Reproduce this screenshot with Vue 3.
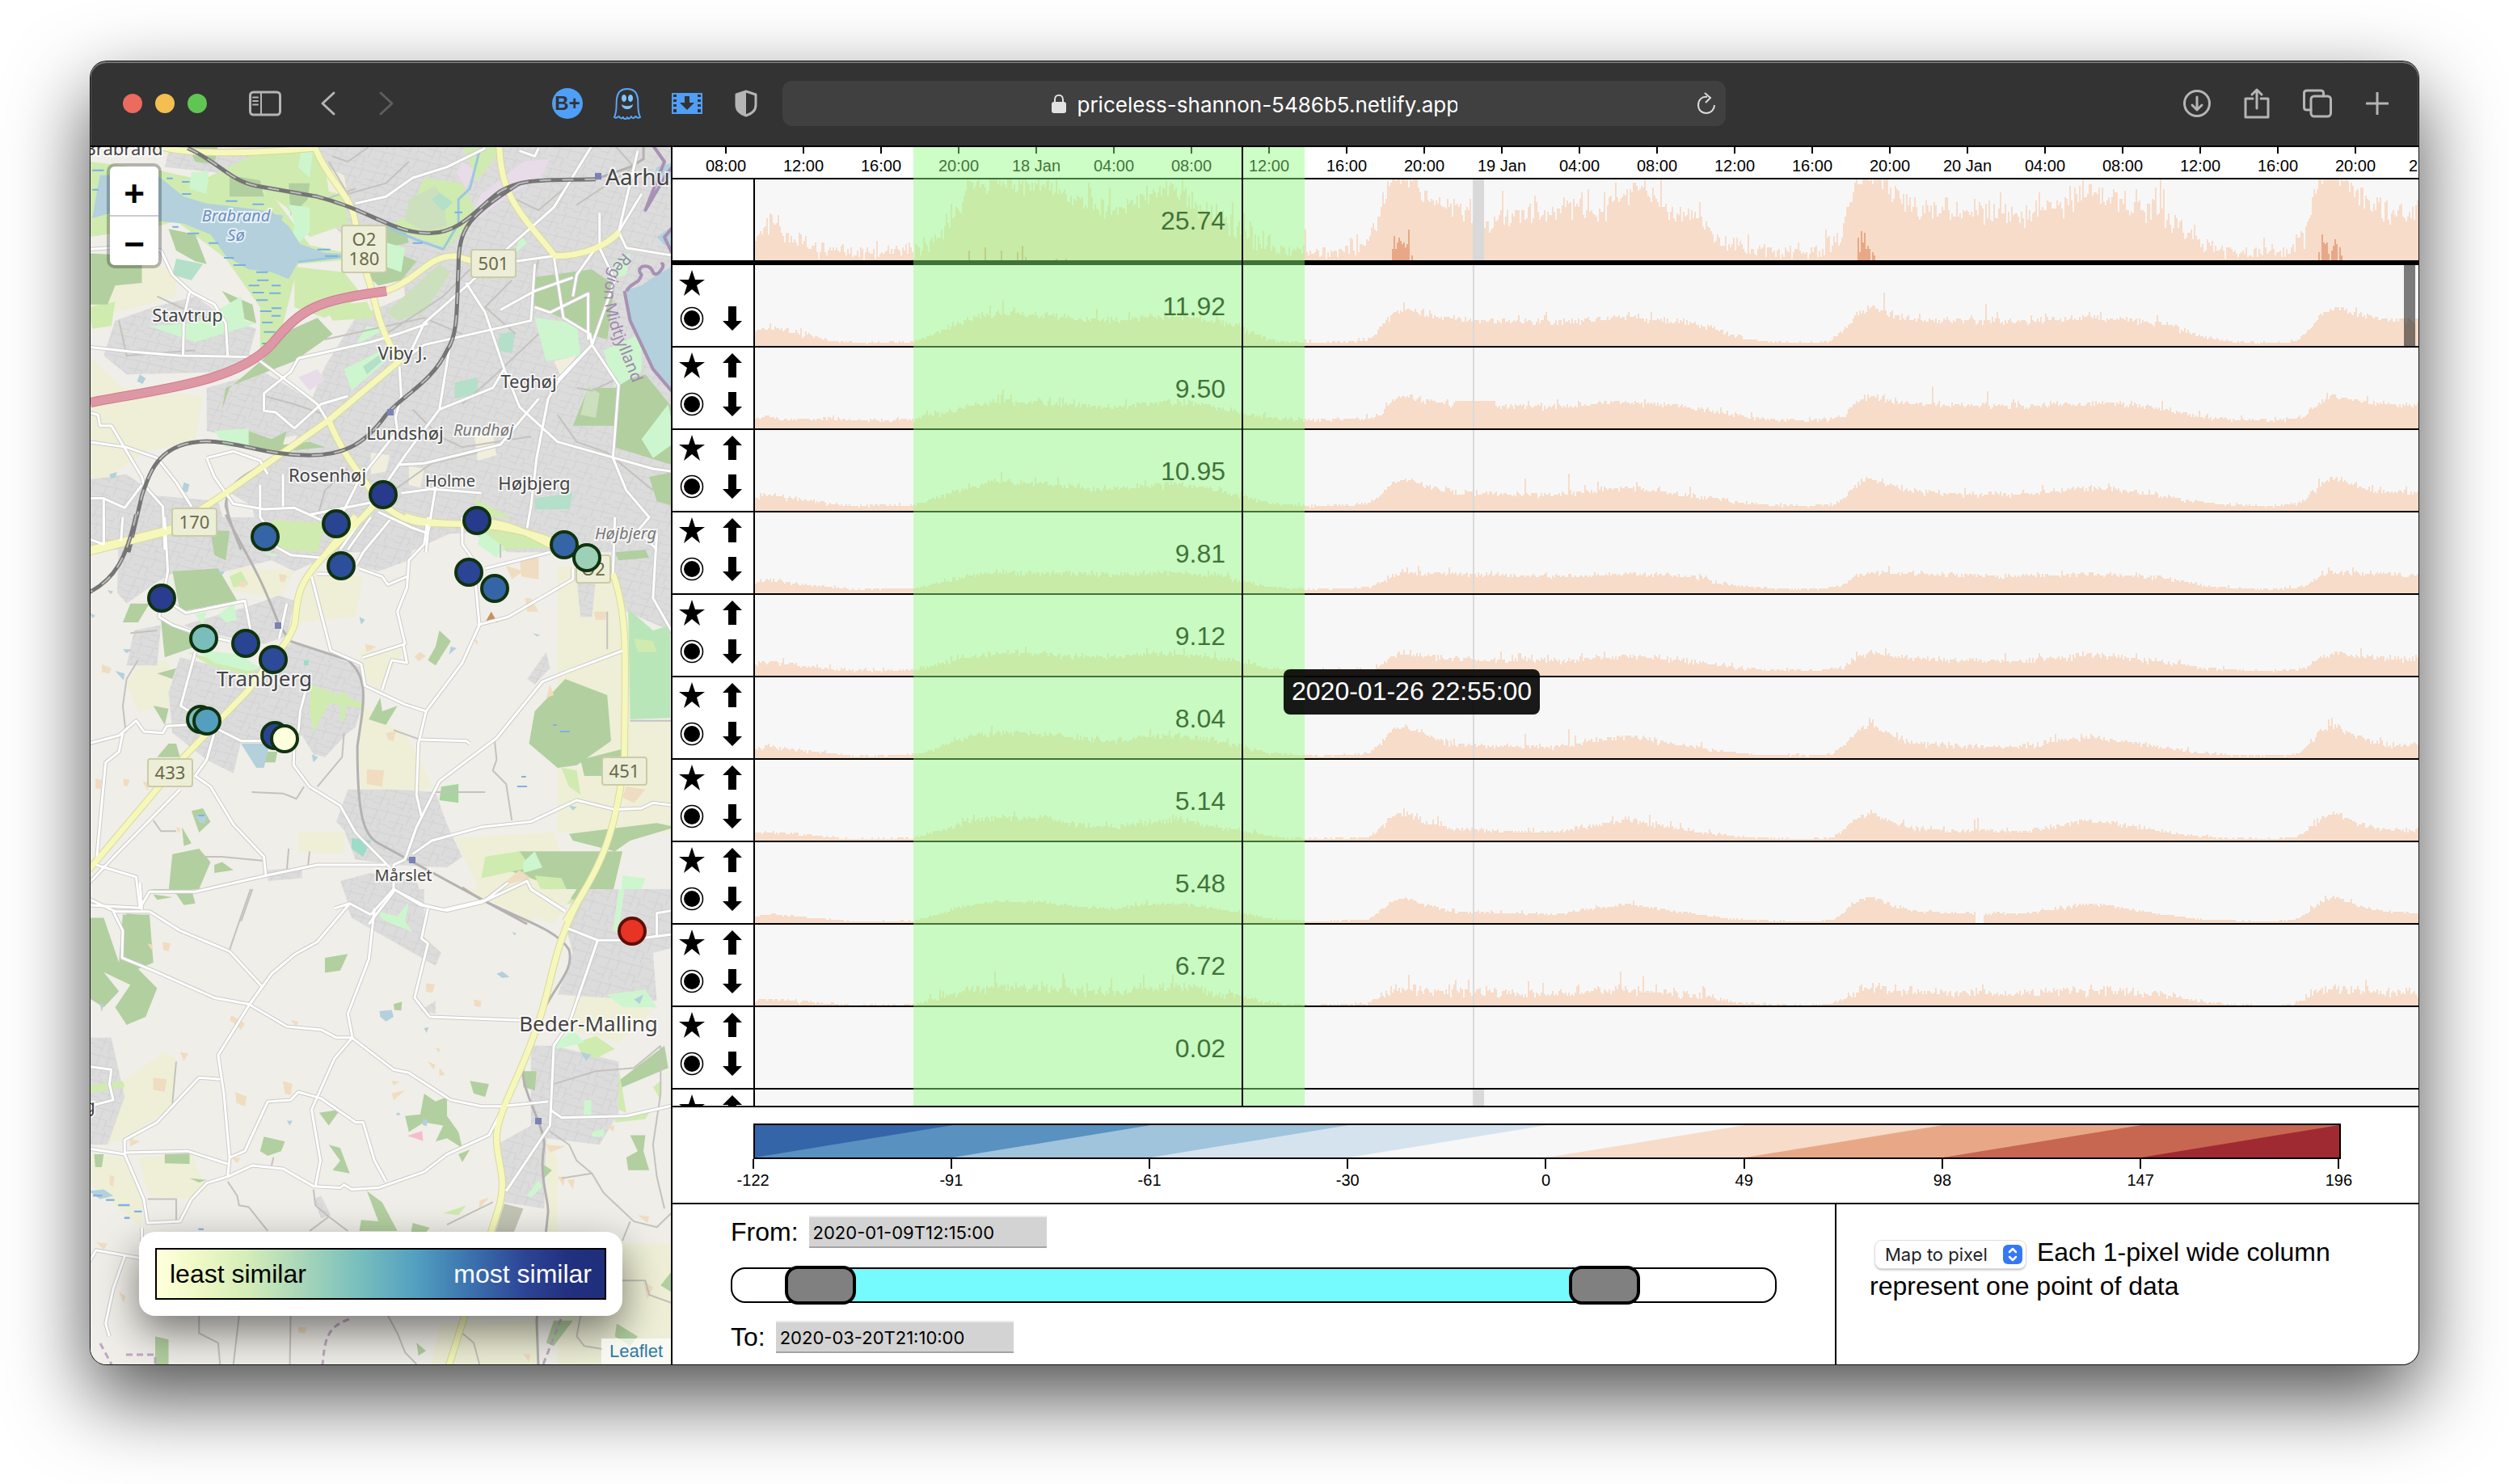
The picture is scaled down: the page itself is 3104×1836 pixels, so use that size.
<script setup>
const ticks = [
  '08:00', '12:00', '16:00', '20:00', '18 Jan', '04:00', '08:00', '12:00', '16:00', '20:00',
  '19 Jan', '04:00', '08:00', '12:00', '16:00', '20:00', '20 Jan', '04:00', '08:00', '12:00',
  '16:00', '20:00', '21 Jan',
]

const CHART_W = 2058

function random(seed) {
  let s = seed
  return () => {
    s = (s * 1664525 + 1013904223) % 4294967296
    return s / 4294967296
  }
}

function levelAt(points, x) {
  for (let i = 1; i < points.length; i++) {
    if (x <= points[i][0]) {
      const [x0, y0] = points[i - 1]
      const [x1, y1] = points[i]
      return y0 + ((y1 - y0) * (x - x0)) / (x1 - x0)
    }
  }
  return points[points.length - 1][1]
}

// One column for every two pixels, as a stepped area.
function area(points, seed, noise, spikes = {}, gap = null) {
  const rnd = random(seed)
  let d = 'M0 100'
  for (let x = 0; x < CHART_W; x += 2) {
    const base = levelAt(points, x)
    const r = rnd() + rnd() - 1
    const burst = rnd() > 0.92 ? rnd() * noise * 1.8 : 0
    let h = base + (r * noise + burst) * Math.min(1, base / 22 + 0.12)
    if (spikes[x]) h = spikes[x]
    if (gap && x >= gap[0] && x < gap[1]) h = 0
    h = Math.max(0, Math.min(100, Math.round(h / 2) * 2))
    d += `V${100 - h}H${x + 2}`
  }
  return d + 'V100Z'
}

// Typical traffic curve: start, floor, first day (a, b, c), then peak, plateau, hump.
function curve(s, f, a, b, c, p, m, h) {
  const day = (x) => [
    [x - 46, f + 2], [x - 34, p * 0.35], [x - 14, p * 0.85], [x + 2, p], [x + 26, (p + m) / 2 + 1],
    [x + 60, m + 3], [x + 120, m + 1], [x + 190, m], [x + 230, (m + h) / 2], [x + 276, h],
    [x + 330, m + (h - m) * 0.35], [x + 372, m * 0.85], [x + 410, f + (m - f) * 0.3], [x + 452, f + 1], [x + 500, f],
  ]
  return [
    [0, s * 0.9], [16, s * 1.1], [50, s * 0.8], [90, f + 3], [120, f], [196, f + 1], [230, f + (a - f) * 0.4],
    [266, a * 0.85], [300, a], [356, a * 0.95], [400, b + 2], [446, b], [490, (b + c) / 2 + 2], [526, c],
    [566, b], [600, b * 0.72], [636, f + 3], [690, f],
    ...day(802), ...day(1378), ...day(1952),
  ]
}

const mainCurve = [
  [0, 32], [14, 42], [28, 44], [42, 30], [58, 20], [80, 14], [110, 10], [160, 8], [196, 12], [216, 22],
  [236, 42], [256, 70], [268, 98], [346, 92], [366, 88], [400, 72], [426, 64], [450, 58], [466, 72],
  [506, 90], [526, 88], [546, 62], [570, 58], [596, 40], [616, 24], [646, 14], [686, 10], [726, 12],
  [756, 20], [766, 38], [776, 70], [788, 102], [812, 106], [826, 80], [844, 70], [870, 62], [888, 50],
  [904, 46], [926, 54], [986, 56], [1016, 66], [1051, 58], [1068, 82], [1106, 86], [1126, 62], [1166, 54],
  [1186, 26], [1216, 16], [1236, 10], [1316, 10], [1336, 20], [1348, 50], [1358, 82], [1366, 106],
  [1390, 106], [1402, 84], [1426, 66], [1466, 62], [1506, 60], [1566, 55], [1616, 66], [1646, 84],
  [1666, 80], [1706, 66], [1746, 56], [1766, 36], [1796, 18], [1826, 10], [1896, 10], [1916, 26],
  [1926, 70], [1936, 102], [1968, 106], [1982, 82], [2016, 62], [2042, 55], [2058, 70],
]

const peaks = [
  [264, 12], [284, 16], [304, 12], [324, 10], [330, 18], [334, 4], [372, 2], [384, 2],
  [788, 14], [790, 30], [792, 14], [794, 22], [796, 28], [798, 24], [800, 20], [802, 22], [804, 16], [806, 20], [808, 38], [812, 6],
  [1364, 28], [1366, 10], [1368, 36], [1370, 22], [1372, 34], [1374, 14], [1376, 18], [1378, 14], [1382, 10], [1384, 6],
  [1934, 10], [1938, 32], [1940, 22], [1942, 20], [1944, 22], [1946, 8], [1950, 12], [1952, 18], [1954, 26], [1956, 20], [1960, 16], [1962, 6],
]
const mainArea = area(mainCurve, 11, 18)
const mainPeaks = peaks.map(([x, h]) => `M${x} 100v${-h}h2v${h}z`).join('')

const flat = {}
for (let x = 866; x < 916; x += 2) flat[x] = 34

const rows = [
  { value: '11.92', d: area(curve(21, 4, 40, 32, 37, 47, 30, 35), 3, 5.5, { 306: 56, 1396: 66, 1522: 52 }) },
  { value: '9.50', d: area(curve(13, 10, 33, 27, 32, 40, 27, 32), 5, 5, { 306: 48, 1456: 52, 1524: 46, ...flat }) },
  { value: '10.95', d: area(curve(18, 6, 36, 27, 32, 40, 20, 29), 7, 5, { 952: 40, 1006: 46, 1042: 36 }) },
  { value: '9.81', d: area(curve(15, 5, 26, 22, 25, 26, 21, 24), 9, 4) },
  { value: '9.12', d: area(curve(16, 6, 28, 22, 27, 29, 18, 25), 13, 5) },
  { value: '8.04', d: area(curve(13, 3, 32, 22, 28, 40, 14, 27), 15, 5, { 952: 30, 1006: 36 }) },
  { value: '5.14', d: area(curve(10, 2, 29, 17, 26, 34, 11, 26), 17, 5, { 1508: 26, 1512: 28 }) },
  { value: '5.48', d: area(curve(10, 2, 27, 18, 24, 32, 11, 24), 19, 3, {}, [1510, 1520]) },
  { value: '6.72', d: area(curve(7, 0, 24, 16, 24, 22, 14, 20), 21, 9) },
  { value: '0.02', d: '' },
  { value: '', d: '', last: true },
]

const scaleColors = ['#3465a8', '#5991c1', '#9fc4dc', '#d5e3ef', '#f7f7f7', '#f7dcc9', '#e8a888', '#c76751', '#a02a32']
const scaleLabels = ['-122', '-91', '-61', '-30', '0', '49', '98', '147', '196']

const G = '#b2cf9f'
const L = '#cfebb0'
const F = '#eeefd6'
const W = '#b3d0dc'
const R = 'url(#streets)'
const O = '#f0dcc0'
const M = '#cdf6cf'
const P = '#b4dfc8'

// Three sheets of the map, north to south, each in its own grid.
const sheets = [
  {
    t: 'translate(-12 -2) scale(.4719 .3333)',
    areas: [
      [F, 'M20 430 160 420 250 470 250 560 90 620 20 600ZM20 780 110 900 320 930 300 1100 180 1130 60 1240 20 1230Z'],
      [R, 'M600 0H1560V1510H1120L1000 1420 860 1510H470L450 1340 380 1280 470 1180 560 1100 640 820 720 640 850 560 840 420 700 350 560 160 480 120 220 80 230 20Z'],
      [R, 'M90 650 190 600 300 560 380 640 460 680 440 780 400 840 120 850 60 780ZM330 900 480 840 620 960 620 1060 480 1100 330 1060ZM20 1240 120 1220 200 1300 360 1320 380 1420 240 1500H20Z'],
      [L, 'M20 60 200 90 260 110 330 130 500 180 600 370 700 400 690 425 570 440 545 580 520 720 470 770 470 600 380 420 250 280 200 300 20 340Z'],
      [L, 'M500 0H610L690 170 700 290 600 340 540 230 480 170 350 160 330 120ZM560 450 690 470 740 560 640 640 560 600ZM900 120 1000 140 1040 260 960 380 800 300 860 260ZM1000 0H1110L1040 130ZM640 600 750 580 770 640 660 650ZM20 600 90 580 80 670 30 680ZM1240 1440 1340 1490 1080 1500 1030 1310 1130 1380Z'],
      [G, 'M20 400 160 410 160 510 90 520 70 590 20 590ZM540 690 620 640 660 700 560 800 470 850 380 900 370 980 390 900 480 790ZM1185 490 1340 460 1400 520 1380 720 1330 700 1260 640 1190 600ZM1400 880 1480 850 1560 990V1190L1400 1120ZM1290 1040 1330 900 1410 900 1400 1040ZM390 110 470 130 480 190 390 190ZM545 140 600 140 595 200 550 260ZM280 0 360 0 350 70 300 60ZM720 300 850 310 860 360 800 380 880 430 840 500 780 520 740 470ZM420 1050 500 1090 540 1060 530 1110 600 1100 640 1120 500 1140 430 1120ZM230 310 300 330 330 440 300 430 250 390ZM370 540 450 590 460 660 420 640ZM1490 1230 1560 1210V1340L1510 1320ZM330 1480 400 1450 400 1500H300Z'],
      ['#cce0bd', 'M860 200 930 150 950 200 960 300 900 320 850 280ZM940 440 970 470 900 620 830 650 800 620ZM1330 890 1360 920 1350 1010 1310 1000Z'],
      [M, 'M290 100 335 95 330 180 285 160ZM545 220 600 230 600 320 550 390 560 290ZM750 670 800 680 720 740ZM690 830 790 760 800 800 710 910ZM1190 640 1300 660 1310 780 1220 800ZM1470 1090 1540 960 1560 1100 1500 1160ZM1370 760 1470 700 1470 840 1400 900ZM350 1060 440 1050 440 1120 380 1120ZM1150 330 1170 360 1140 400ZM180 670 300 660 420 560 430 650 460 660 300 730 240 700ZM800 360 850 380 840 470 800 450ZM580 0H610L600 120 570 80ZM1050 1430 1110 1490 1090 1530 1040 1480ZM1400 430 1440 400 1430 480 1380 500Z'],
      [P, 'M920 200 940 175 975 210 950 245ZM250 420 320 440 290 500 240 480ZM980 880 1040 860 1040 920 980 940ZM1190 1310 1290 1290 1280 1350 1190 1350ZM1100 700 1140 690 1130 770 1090 760ZM740 820 790 770 790 800 750 850Z'],
      ['#e8dce8', 'M1160 60 1230 50 1210 110 1120 190 1030 280 1000 330 1050 180ZM570 860 620 830 640 870 600 910ZM1000 60 1030 90 1010 160 985 100Z'],
      ['#f2eedd', 'M640 80 690 110 700 190 650 170ZM1240 800 1300 780 1260 860ZM1030 1060 1080 1070 1090 1150 1040 1170ZM760 1140 810 1150 800 1210 760 1220ZM860 1190 900 1200 890 1270 860 1260Z'],
      [W, 'M50 110 200 110 270 190 330 215 420 230 500 245 545 300 575 365 640 398 700 403 690 412 600 424 570 432 545 496 500 470 440 460 380 410 340 330 270 290 200 280 80 250 30 270ZM1560 60 1510 80 1500 130 1560 120ZM1425 540 1470 520 1500 490 1560 440V920L1500 820 1440 650ZM510 255l20 5-5 25-15-5ZM155 850l15 15-8 20-15-10ZM270 1250l15 8-6 30-14-6ZM75 1220l20-8-4 20-12 4ZM1510 340 1560 290V380L1530 370Z'],
    ],
    minor: [
      'M650 60 700 180 800 140 860 60M760 0 700 60 660 40M640 720 900 640 1000 700M480 930 560 960 640 1000M1000 960 1080 860 1200 700M1020 460 950 560 800 700M1110 180 1200 240 1300 120M1130 500 1060 600 1140 700M870 980 940 1080 1000 1120 1180 1080M820 1280 920 1180 1040 1140M100 650 120 780 300 760M200 560 260 600 330 640M1400 0 1450 80 1300 220M1250 1000 1300 1100 1380 1140 1500 1280M380 1290 390 1400 440 1500M700 1200 640 1280 620 1380M1200 420 1180 560M640 200 720 160M1300 900 1340 910 1400 870',
    ],
    white: [
      'M20 385 100 378 210 390 240 480 290 545 350 590 380 660 385 780', 'M285 545 270 640 268 780', 'M20 748 130 765 260 780 450 785 470 800 570 905 620 960 650 1030',
      'M570 790 550 840 480 920 480 985 510 990 560 1050 630 960 700 930', 'M570 790 760 730 830 700 910 660', 'M720 215 800 190 870 120 960 80 1060 10',
      'M1340 0 1240 230 1120 380 1020 510 900 660 860 780 900 740 1180 650 1190 440', 'M1010 510 1060 620 1110 830 1150 970 1250 1100 1400 1160 1500 1200 1550 1210',
      'M1460 20 1410 320 1430 380 1560 410', 'M1140 430 1240 410 1265 640 1335 700 1340 740 1410 890 1395 1160 1430 1280 1490 1380 1460 1430 1510 1500',
      'M1360 250 1360 380 1400 500 1340 740 1250 880 1225 940 1195 1160 1180 1340 1170 1420', 'M1250 870 1340 740M1100 610 1190 540 1290 490M1190 600 1230 620 1330 550V720',
      'M835 820 840 930 825 1010 830 1060 730 1240 680 1380', 'M970 720 940 980 850 1150 740 1380 680 1500', 'M940 980 1080 900 1110 830',
      'M20 990 45 1000 50 1040 80 1040 160 1230 165 1260 215 1340 220 1500', 'M20 1100 120 1120 200 1160 250 1250 290 1340', 'M20 1310 60 1310 115 1345 160 1260M60 1310V1500',
      'M330 1160 350 1230 400 1330 480 1350 560 1345 630 1390M330 1160 400 1135 470 1170 490 1220M470 1260 470 1380 490 1420M530 1220V1340', 'M830 1185 900 1180 1100 1110 1200 940',
      'M840 1290 920 1275 1050 1290M930 1270 910 1440 905 1510M780 1360 870 1420 910 1440', 'M990 0 1060 0M1150 20 1190 40 1200 10M1470 180 1410 320',
      'M1355 370 1300 480 1290 560',
    ],
    yellow: [
      'M180 -10C250 40 450 30 610 10', 'M610 -5C650 140 710 180 720 290L750 480C780 600 770 650 835 800L650 1020 380 1290 240 1420 20 1500',
      'M1097 -5C1100 200 1160 260 1243 410C1320 410 1380 370 1412 320', 'M770 550C880 520 900 410 980 410L1030 430',
      'M650 1020C690 1160 740 1230 780 1320C860 1420 900 1400 1000 1405C1100 1370 1180 1450 1240 1490', 'M780 1320 650 1510',
    ],
    rail: [
      'M280 10C360 60 390 130 460 150L620 190C760 240 820 330 920 325C1000 320 1040 230 1100 170C1160 120 1220 130 1350 125',
      'M1150 140C1020 260 990 300 990 450C985 600 990 700 960 760C920 880 850 920 800 1000C740 1120 680 1150 600 1150C480 1150 420 1100 330 1098C200 1100 180 1220 160 1300L125 1510',
    ],
    track: ['M540 1145C420 1220 380 1260 380 1340L400 1430 420 1500', 'M1350 125 1440 80 1475 50 1475 0'],
  },
  {
    t: 'translate(-12 458) scale(.4719 .3333)',
    areas: [
      [F, 'M390 180 560 200 520 300 390 270ZM590 210 740 220 720 370 570 390ZM1250 180 1400 200 1420 560 1420 920H1250ZM740 700 860 820 920 1000 800 1060 740 1060 725 880ZM1250 920 1400 960 1420 1170H1250ZM980 1190 1240 1170 1260 1260 1180 1500 1050 1400ZM570 1170H690V1245H570ZM150 550 230 530 240 700 150 720 120 620ZM1430 760H1560V1170H1420ZM730 490 850 490 780 640 740 600Z'],
      [R, 'M20 0H720L640 150 560 200 500 160 380 200 250 200 200 240 120 320 95 280 100 60 20 40ZM1380 0H1560V430L1430 350 1400 200ZM900 0H1390L1380 100 1240 90 1100 40 1000 60 900 60ZM800 0H900L860 160 780 200 720 180Z'],
      [R, 'M260 520 440 580 560 460 740 560 740 690 720 780 700 800 640 890 610 880 580 810 420 830 400 950 330 900 240 800 230 650ZM270 400 440 330 520 290 560 310 540 440 480 470 300 420ZM140 420 210 400 200 550 120 550ZM820 1010 930 1020 960 1140 1000 1260 960 1300 830 1290 720 1270 690 1160 670 1130 700 1010ZM680 1350 760 1320 880 1350 900 1430 820 1450 780 1520 700 1430ZM1290 1410H1560V1510H1270ZM1300 230 1350 230 1340 370 1310 370ZM1220 500 1230 560 1190 620 1170 600ZM490 1310 580 1300 580 1340 490 1350Z'],
      [G, 'M240 200 360 190 410 310 260 350ZM1190 720 1270 600 1380 660 1390 830 1300 920 1250 930 1175 840ZM210 380 280 420 300 480 220 520ZM110 390 130 320 180 320 150 390ZM200 580 250 560 240 600ZM190 700 230 710 220 770ZM240 1250 310 1230 340 1280 310 1380 230 1390ZM265 1150 290 1210 270 1220ZM1060 1280 1150 1240 1420 1240 1390 1420 1290 1420 1200 1350ZM1280 1175 1510 1135 1560 1150 1440 1200 1400 1240 1290 1200ZM785 670 790 720 830 700 800 770 755 750ZM940 420 970 460 930 550 910 530 930 480ZM350 1290 370 1280 400 1310 350 1320ZM230 840 250 840 260 890 200 890ZM190 1400 240 1410 200 1420ZM120 1470 180 1480 170 1500H120ZM1310 900 1420 860 1400 960 1320 960ZM340 50 390 50 380 160 350 140ZM290 1090 320 1080 340 1130 310 1170ZM1400 130 1480 120 1490 150 1410 160ZM480 870 515 870 510 910 480 910Z'],
      [L, 'M500 10 640 20 620 130 520 120ZM600 620 740 690 735 710 650 690 610 800 600 720ZM1190 1330 1260 1340 1290 1430 1230 1460ZM1060 1260 1150 1240 1180 1300 1050 1340ZM1260 930 1300 940 1310 1030 1280 1000ZM390 220 420 200 440 250 400 260ZM280 500 460 570 440 590 340 550ZM680 650 700 650 690 760 680 760Z'],
      ['#b9e6b8', 'M1435 340 1500 420 1545 400V745L1440 750Z'],
      [L, 'M1450 450 1500 460 1510 500 1460 500Z'],
      [M, 'M300 360 330 350 320 400ZM360 360 400 320 410 380 380 390ZM300 490 420 510 470 560 440 570 350 540ZM1050 60 1110 130 1070 120ZM1160 1280 1190 1240 1210 1300 1160 1320ZM1420 1330 1480 1340 1470 1380 1430 1390 1420 1500H1410ZM780 1450 830 1440 860 1430 830 1500H780ZM480 130 520 140 500 145Z'],
      ['#9cdcc8', 'M710 1190 760 1200 740 1260 710 1230ZM860 1380h14v8h-14ZM585 530h12v20h-12Z'],
      ['#a8d4a0', 'M945 1000 990 990 990 1060 940 1050Z'],
      [O, 'M1115 180 1160 200 1130 230ZM1150 150 1200 150 1200 230 1155 220ZM750 935 795 940 790 1000 750 990ZM1150 1310 1180 1340 1100 1370ZM745 470 775 480 750 500ZM875 515 890 500 905 515 885 535ZM55 545 80 560 75 580 55 575ZM800 800 825 795 820 830 805 825ZM1230 620 1240 660 1220 670ZM1430 1000 1480 1010 1450 1060 1420 1040ZM1165 300 1180 300 1200 350 1170 350ZM1345 350 1380 350 1375 380 1350 380ZM415 235 435 240 430 260 415 258ZM112 970 128 975 122 1000 112 995ZM38 970 55 975 52 1010 38 1005ZM162 980 180 985 175 1015ZM520 210 540 215 535 240 522 238ZM1115 1390 1130 1400 1125 1430 1112 1425ZM1030 450 1042 460 1038 475ZM250 1150 262 1155 256 1175Z'],
      [W, 'M420 840 495 840 480 930 460 930ZM730 370 745 380 735 398ZM110 490 135 490 120 505ZM90 570 115 580 112 605ZM970 480 985 485 965 510ZM1185 430 1205 438 1195 442ZM605 880 622 890 610 910ZM300 1110 330 1105 325 1140 310 1130ZM1280 1070 1300 1075 1290 1088ZM360 200 378 200 370 215ZM70 270 85 275 78 285ZM25 355 38 365 30 375Z'],
      ['#7fb0e8', 'M1256 792h26v6h-26ZM1144 996h26v6h-26ZM1155 960h12v6h-12ZM308 1104h16v6h-16ZM1238 768h10v6h-10Z'],
      ['#c8905c', 'M1076 350 1092 390 1060 390Z'],
    ],
    minor: [
      'M448 1020 530 1025 565 1045 585 1000M820 790 890 825M920 1020 1060 1020M620 1000 685 890 690 800M150 530 120 600 110 700 118 800M130 430 200 420M1085 830 1090 900 1080 940 1115 990 1130 1125M190 1125 210 1165 250 1165M320 1260 370 1260 480 1275M545 1230 540 1310M600 1240 595 1300M450 1380 420 1500M1380 350 1380 490M1100 100V150M1440 755H1560',
    ],
    white: [
      'M220 0 228 200 205 370 240 400 300 430 390 460', 'M205 290 275 355 430 310 445 420', 'M300 500 262 700 350 780 420 830 480 830', 'M20 840 100 810 145 755 165 795 215 800 225 775 280 770',
      'M110 800 100 870 65 910 40 1290 145 1335 155 1450 20 1440', 'M605 220 655 495 735 545 745 625 850 695 905 720 885 840 880 1030 893 1110', 'M910 0 900 100 860 160 855 260 830 350 850 470 740 520M845 470 855 540 815 530 790 640',
      'M1035 250 1045 400 1000 540 905 720', 'M1040 400 1120 370 1290 230V190', 'M1420 495 1280 570 1210 610 1090 820 940 980 880 1150 850 1270', 'M870 1250 920 1200 1050 1150 1180 1130 1300 1050 1400 1085 1470 1080 1500 1060 1560 1070',
      'M300 960 340 1000 400 1140 480 1260 485 1330 300 1390 180 1390 155 1450', 'M485 1330 620 1290 800 1290', 'M350 800 330 900 300 960', 'M560 800 558 920 600 1000 680 1070 720 1170 810 1300', 'M850 1270 820 1290 820 1390 755 1510',
      'M820 1380 900 1440 960 1460 1050 1430 1170 1350 1180 1380 1270 1460', 'M500 100 550 140 630 150M730 190 790 220 805 250 855 220M1060 190 1230 130M1400 0 1395 210M1510 60 1500 300 1560 450M1000 0 1000 100 1030 160', 'M260 1010 100 1240 20 1360', 'M590 640 575 720 570 800',
      'M890 825 1010 830 1020 840', 'M620 210 700 210M760 0 700 120M600 -10 780 -60M810 10 740 130 720 180', 'M60 0V100L20 80M110 0 105 90', 'M540 320 520 450',
    ],
    yellow: [
      'M720 -5 640 140C560 260 570 300 560 400C540 480 500 520 440 640L270 890 20 1310', 'M850 -5C950 50 1050 -10 1240 90', 'M1395 210C1440 380 1425 600 1425 900C1400 1200 1360 1300 1270 1500', 'M20 130 240 50',
    ],
    rail: ['M145 -10C120 150 90 230 20 280'],
    track: ['M380 -10C440 160 460 180 520 400L550 460 700 530C760 600 740 700 725 850C725 1100 740 1180 780 1210L1040 1410 1170 1510'],
  },
  {
    t: 'translate(-12 918) scale(.4719 .3953)',
    areas: [
      [F, 'M70 800 100 610 220 510 250 530 240 680 120 780ZM150 840 290 830 330 940 280 970 180 960ZM20 830 115 840 160 960 160 1060 20 920ZM1290 330 1380 320 1500 380 1410 480 1290 440ZM1250 1110H1560V1500H1250ZM940 1360 1200 1350 1200 1500H920ZM1220 780 1250 850V1080H1225ZM1000 0 1300 0 1240 110 1100 50Z'],
      [R, 'M1310 0H1560V180L1500 200 1510 350 1250 330 1290 200 1270 110ZM700 60 780 0 900 0 900 150 945 200 930 240 710 90ZM1180 490 1240 490 1410 540 1410 700 1360 800 1220 780 1215 1000 1110 980 1090 800 1180 740ZM20 465 80 465 115 650 70 800 20 800ZM610 970 630 960 655 1020 630 1030ZM890 380 930 350 930 390Z'],
      ['#c2c4b4', 'M1110 985 1160 1000 1130 1090 1085 1080Z'],
      [G, 'M20 90 60 90 100 230 110 80 180 80 190 230 150 250 200 310 170 400 120 425 90 370 130 300 60 260 100 320 60 370 20 340ZM640 215 700 203 680 255 640 262ZM850 710 890 705 900 640 930 665 960 650 960 710 990 760 1000 810 960 780 930 790 950 740 900 730 860 760ZM480 775 535 790 525 820 490 835 470 820ZM650 800 680 810 705 890 660 880 680 850ZM1020 600 1070 610 1060 650 1030 640ZM750 945 790 980 830 1070H730L735 1035 780 1040ZM1410 600 1530 490 1540 560 1410 625ZM1440 770 1480 770 1475 820 1490 880 1435 880 1430 840 1460 820ZM195 1400 230 1410 230 1500H195ZM625 700 680 690 650 740ZM220 830 285 828 285 860 220 858ZM1160 570 1195 570 1190 630 1160 620ZM870 1045 915 1060 900 1080H865ZM1210 860 1235 880 1210 910ZM1240 1350 1290 1350 1240 1430 1220 1420ZM820 360 842 352 840 380 822 378ZM990 830 1020 815 1000 855ZM180 0 290 0 300 45 270 50 250 15ZM1405 1360 1460 1400 1440 1430 1400 1400ZM35 830 60 830 55 870 38 870ZM1560 1180 1520 1240 1560 1270ZM880 1420 905 1445 885 1460ZM285 905 330 910 310 918Z'],
      [L, 'M1300 480 1350 460 1400 500 1350 530 1310 510ZM1400 710 1490 700 1480 720 1400 730ZM1410 560 1430 700 1410 690ZM950 1015 1010 990 990 1020ZM20 615 110 600 115 620 20 640ZM1500 620 1520 600 1520 660Z'],
      [M, 'M780 70 830 85 860 40 850 100 870 135 790 95ZM1410 0 1425 0 1410 130 1395 130ZM1380 330 1480 315 1510 370 1420 370ZM1240 490 1290 440 1320 480 1250 500ZM1170 960 1200 910 1210 930 1180 965ZM1320 660 1338 660V710H1318ZM1340 760 1372 750 1370 775 1340 775Z'],
      [O, 'M190 590 225 595 220 635 190 628ZM530 600 555 610 550 645 535 640ZM405 635 435 650 430 680 408 670ZM905 295 928 298 922 325 905 320ZM1030 345 1050 350 1048 370 1032 366ZM550 410 570 415 565 430ZM395 395 430 420 420 440 390 410ZM215 165 235 170 230 195 216 190ZM260 510 282 515 270 538ZM815 600 835 602 820 615ZM815 640 850 630 820 660ZM910 540 930 550 925 565ZM940 560 955 580 940 585ZM1045 975 1070 965 1045 1000ZM395 840 418 842 410 858ZM128 780 155 790 130 805ZM1220 800 1270 805 1230 825ZM75 895 88 900 85 930 76 925ZM40 1105 70 1110 60 1128ZM100 1260 118 1275 112 1295ZM570 1370 592 1372 588 1390 570 1388ZM1380 740 1400 740 1395 760ZM1460 1020 1490 1025 1485 1045ZM1160 1455 1178 1455 1175 1480ZM1475 1230 1500 1245 1485 1285ZM1250 900 1270 900 1265 930ZM1275 910 1295 908 1290 940ZM930 495 942 500 938 512ZM175 170 190 175 185 190Z'],
      ['#f7bccb', 'M856 772 895 757 897 788Z'],
      [W, 'M783 382 815 378 820 400 800 414 785 400ZM540 725 555 725 548 740ZM1090 265 1105 258 1124 275 1105 278ZM1130 135 1142 138 1138 145ZM900 435 912 432 906 450ZM1310 510 1338 518 1325 538ZM20 945 60 940 85 960 50 970ZM897 720 910 722 906 742 896 738ZM828 700h8v8h-8ZM50 360 60 360 55 385ZM1450 345 1475 330 1465 360Z'],
      ['#7fb0e8', 'M98 986h30v6h-30ZM140 1006h20v6h-20ZM32 956h24v6h-24ZM66 970h22v6h-22ZM114 1026h14v6h-14ZM308 1062h14v5h-14Z'],
    ],
    minor: [
      'M445 0 410 120 390 190M250 540 240 670M385 915 410 960 415 990 440 995 490 1070M610 940 615 990 650 1025 700 1070M600 1070 650 1025M960 1050 1080 980M1220 750 1280 800 1300 850 1340 890 1370 950 1450 1040 1510 1058 1560 1000M1260 905 1340 890M310 1335V1390L360 1420 365 1487M415 1335 400 1487M550 1335 548 1487M805 1335 830 1390 850 1450 880 1487M1000 1390 1030 1420 1045 1487M1400 1225H1480L1490 1270 1560 1300M250 1040V970L175 970M1240 610 1350 570 1450 560 1520 490M1440 1040 1420 1100M1310 1335 1300 1400 1320 1430 1370 1440M500 865 505 840M1520 490 1520 640 1500 800 1510 900 1530 1000',
    ],
    white: [
      'M20 30 90 70 180 70 260 130 390 195 475 305 440 365 360 520 375 640 390 840 385 900 330 920 290 970 260 1040 175 1045 165 970 115 830 20 812', 'M85 70 110 130 108 215 200 260 350 340 440 360 540 430 630 440 670 465 710 465 820 565 860 575 970 660 1050 680 1100 680 1225 665',
      'M665 60 705 45 620 165 560 205 500 265 440 365M705 45 760 80M770 60 755 220 700 390 712 465 665 530 605 690 628 850 615 930', 'M820 0 760 80M820 0 890 50 950 65 1060 35 1120 -20', 'M115 830V785L200 730 310 590 365 595', 'M390 840 430 820 490 665 550 660 570 635 630 655 720 730 740 730 770 850 800 915',
      'M385 900 450 865 530 875 610 930 680 935 690 925 710 940 780 935 900 885 960 830 1070 770 1105 690', 'M115 825 280 820 385 860', 'M910 60 893 155 910 170 875 340 915 400 1180 412', 'M1270 120 1355 160 1430 160 1560 140M1510 150V75L1560 65', 'M1355 160 1280 420 1240 490 1230 740 1115 945', 'M1230 690 1260 715 1430 710 1560 675',
      'M20 1170 40 1130 155 1155M160 1060V1150M115 1150 85 1250 65 1360 75 1400', 'M20 555 80 565 75 610 85 660 20 680V800', 'M1180 0 1270 70',
      'M155 -20 160 65',
    ],
    yellow: ['M1325 -5C1230 180 1240 300 1190 450C1140 620 1090 700 1090 780C1090 860 1120 900 1095 1000L960 1510'],
    rail: [],
    track: ['M1000 -5C1100 80 1240 110 1280 190C1300 280 1200 320 1160 560C1150 620 1215 740 1215 800C1200 900 1225 960 1225 1010L1195 1350 1200 1510'],
  },
]

const shields = [
  { x: 311, y: 97, w: 55, h: 58, lines: ['O2', '180'] },
  { x: 471, y: 127, w: 55, h: 34, lines: ['501'] },
  { x: 101, y: 447, w: 55, h: 34, lines: ['170'] },
  { x: 601, y: 505, w: 42, h: 34, lines: ['O2'] },
  { x: 71, y: 757, w: 55, h: 34, lines: ['433'] },
  { x: 633, y: 755, w: 55, h: 34, lines: ['451'] },
]

const places = [
  { n: 'Brabrand', x: 41, y: 10, k: 'town' }, { n: 'Aarhu', x: 677, y: 47, k: 'city' },
  { n: 'Brabrand', x: 180, y: 92, k: 'lake' }, { n: 'Sø', x: 180, y: 116, k: 'lake' },
  { n: 'Stavtrup', x: 120, y: 216, k: 'town' }, { n: 'Viby J.', x: 386, y: 263, k: 'town' },
  { n: 'Teghøj', x: 542, y: 298, k: 'town' }, { n: 'Lundshøj', x: 389, y: 362, k: 'town' },
  { n: 'Rundhøj', x: 486, y: 357, k: 'quarter' }, { n: 'Rosenhøj', x: 293, y: 414, k: 'town' },
  { n: 'Holme', x: 445, y: 420, k: 'village' }, { n: 'Højbjerg', x: 549, y: 424, k: 'town' },
  { n: 'Højbjerg', x: 662, y: 485, k: 'quarter' }, { n: 'Tranbjerg', x: 215, y: 667, k: 'big' },
  { n: 'Mårslet', x: 387, y: 908, k: 'village' }, { n: 'Beder-Malling', x: 616, y: 1094, k: 'big' },
  { n: 'g', x: -1, y: 1194, k: 'town' },
]

const stations = [[628, 36], [371, 328], [232, 592], [398, 882], [554, 1205]]

const sites = [
  [362, 430, '#283a8c'], [304, 466, '#2a4494'], [216, 482, '#3565a6'], [478, 462, '#283a8c'], [586, 492, '#3565a6'],
  [614, 508, '#9cd1b8'], [310, 518, '#2d4e9b'], [468, 526, '#2b4494'], [500, 546, '#3565a6'], [88, 558, '#293c8e'],
  [140, 608, '#7abebb'], [192, 614, '#2a4494'], [226, 634, '#2d4a98'], [136, 708, '#7abebb'], [144, 710, '#539fbd'],
  [228, 728, '#2a4494'], [240, 732, '#feffdc'],
]
</script>

<template>
  <div class="desktop">
    <div class="window">
      <header class="toolbar">
        <div class="lights"><i class="red"></i><i class="amber"></i><i class="green"></i></div>
        <button class="ico sidebar" aria-label="Sidebar">
          <svg width="40" height="32" viewBox="0 0 40 32"><rect x="1.5" y="2" width="37" height="28" rx="4" /><path d="M15 2v28M5 8.500h6M5 13h6M5 17.500h6" /></svg>
        </button>
        <button class="ico back" aria-label="Back">
          <svg width="20" height="32" viewBox="0 0 20 32"><path d="M17 3 3 16l14 13" /></svg>
        </button>
        <button class="ico forward" aria-label="Forward">
          <svg width="20" height="32" viewBox="0 0 20 32"><path d="M3 3l14 13L3 29" /></svg>
        </button>
        <button class="badge">B+</button>
        <button class="ico ghost" aria-label="Privacy">
          <svg width="36" height="40" viewBox="0 0 36 40"><path d="M2 37C6 28 4 20 5 14 6 6 11 2 18 2s12 4 13 12c1 6-1 14 3 23-3 2-4 0-6-1-2 3-4 3-5 0-2 3-4 4-5 1-1 3-4 3-5 0-2 2-4 2-5-1-2 1-4 3-6 1z" /><path class="fill" d="M14 9c4 0 4 9 0 9s-4-9 0-9zM22 9c4 0 4 9 0 9s-4-9 0-9zM11 21c4 3 10 3 14 0-1 8-13 8-14 0z" /></svg>
        </button>
        <button class="ico film" aria-label="Media">
          <svg width="38" height="26" viewBox="0 0 38 26"><path d="M0 0h38v26H0z" fill="#4f9ff9" /><path d="M2 2h4v3H2zM2 8h4v3H2zM2 14h4v3H2zM2 20h4v4H2zM32 2h4v3h-4zM32 8h4v3h-4zM32 14h4v3h-4zM32 20h4v4h-4zM16 4h6v8h6l-9 9-9-9h6z" fill="#333" /></svg>
        </button>
        <button class="ico shield" aria-label="Privacy report">
          <svg width="30" height="34" viewBox="0 0 30 34"><path d="M15 2l12 4v13c0 7-6 11-12 13C9 30 3 26 3 19V6z" /><path class="fill" d="M15 2 3 6v13c0 7 6 11 12 13z" /></svg>
        </button>
        <div class="address">
          <svg width="18" height="24" viewBox="0 0 18 24"><rect y="10" width="18" height="14" rx="3" fill="#e2e2e2" /><path d="M4 11V7c0-7 10-7 10 0v4" fill="none" stroke="#e2e2e2" stroke-width="2" /></svg>
          <input class="url" aria-label="Address" value="priceless-shannon-5486b5.netlify.app" />
          <button class="reload" aria-label="Reload">
            <svg width="24" height="28" viewBox="0 0 24 28" fill="none" stroke="#dcdcdc" stroke-width="2"><path d="M13 6C6 5 2 10 2 16c0 6 4 10 10 10s10-5 10-10M10 1l7 6-6 6" /></svg>
          </button>
        </div>
        <button class="ico download" aria-label="Downloads">
          <svg width="34" height="34" viewBox="0 0 34 34"><circle cx="17" cy="17" r="15.500" /><path d="M17 9v16M11 19l6 6 6-6" /></svg>
        </button>
        <button class="ico share" aria-label="Share">
          <svg width="32" height="38" viewBox="0 0 32 38"><path d="M11 13H2v23h28V13h-9M16 25V2M10 8l6-6 6 6" /></svg>
        </button>
        <button class="ico tabs" aria-label="Tabs">
          <svg width="36" height="36" viewBox="0 0 36 36"><rect x="10" y="9" width="24.500" height="25" rx="4" /><path d="M10 26H5c-2 0-3.500-1-3.500-3V5c0-2 1.500-3 3.500-3h17c2 0 3.500 1 3.500 3v4" /></svg>
        </button>
        <button class="ico plus" aria-label="New tab">
          <svg width="28" height="28" viewBox="0 0 28 28"><path d="M14 0v28M0 14h28" /></svg>
        </button>
      </header>

      <main class="page">
        <section class="map">
          <svg class="tiles" viewBox="0 0 718 1506" preserveAspectRatio="xMinYMin slice">
            <defs>
              <pattern id="streets" width="62" height="78" patternUnits="userSpaceOnUse" patternTransform="rotate(18)">
                <path d="M0 0h62v78H0z" fill="#dcdcdc" />
                <path d="M0 12h62M0 44h40M22 12v66M48 0v44M0 66h22M40 44v34M40 60h22" fill="none" stroke="#cfcfcf" stroke-width="2" />
              </pattern>
              <path id="coast" d="M660 130C640 150 634 170 636 192C640 224 656 252 676 306" />
            </defs>
            <rect width="718" height="1506" fill="#f0eee8" />
            <g v-for="s in sheets" :key="s.t" :transform="s.t">
              <path v-for="(a, i) in s.areas" :key="i" :fill="a[0]" :d="a[1]" />
              <path v-for="d in s.minor" :key="d" class="minor" :d="d" />
            </g>
            <g transform="translate(-12 -2) scale(.4719 .3333)">
              <path class="brook" d="M1045 20 1020 160 990 200 990 290 950 385 880 350 800 300M570 432 690 412" />
              <path class="marsh" d="M30 92h30M30 164h16M380 206h30M450 218h30M240 302h16M280 326h30M335 362h26M620 386h34M640 410h34M375 417h26M400 444h32M460 470h30M462 500h30M440 520h28M500 520h24M450 546h30M494 548h30M460 574h30M500 604h26M470 615h30M500 632h24M475 657h28M480 692h30M475 735h28M265 135h20M225 122h16M265 180h24M980 248h20M870 362h26" />
              <path class="coast" d="M1500 0 1530 60 1480 240 1530 120 1560 60M1560 290 1530 340 1550 400M1430 540C1450 500 1460 520 1470 480 1450 450 1490 430 1500 470 1510 500 1540 430 1520 440M1425 540 1440 650 1500 830 1560 930" />
            </g>
            <g v-for="s in sheets" :key="'c' + s.t" :transform="s.t">
              <path v-for="d in s.track" :key="d" class="track" :d="d" />
              <path v-for="d in s.white" :key="d" class="white-edge" :d="d" />
              <path v-for="d in s.yellow" :key="d" class="yellow-edge" :d="d" />
            </g>
            <g v-for="s in sheets" :key="'r' + s.t" :transform="s.t">
              <path v-for="d in s.white" :key="d" class="white" :d="d" />
              <path v-for="d in s.yellow" :key="d" class="yellow" :d="d" />
              <template v-for="d in s.rail" :key="d">
                <path class="rail" :d="d" />
                <path class="rail-dash" :d="d" />
              </template>
            </g>
            <path class="motorway-edge" d="M0 316C80 300 180 292 224 244C262 198 280 190 366 178" />
            <path class="motorway" d="M0 316C80 300 180 292 224 244C262 198 280 190 366 178" />
            <path class="bounds" d="M12 1480 26 1506M44 1494H80V1506M320 1450C290 1460 290 1480 287 1506M582 1450 560 1506" />
            <rect v-for="p in stations" :key="p[0]" :x="p[0] - 4" :y="p[1] - 4" width="8" height="8" fill="#7a82b4" />
            <g v-for="s in shields" :key="s.x">
              <rect :x="s.x" :y="s.y" :width="s.w" :height="s.h" rx="3" fill="#edeed8" stroke="#cbcca6" stroke-width="2" />
              <text v-for="(t, i) in s.lines" :key="t" class="ref" :x="s.x + s.w / 2" :y="s.y + 25 + i * 24">{{ t }}</text>
            </g>
            <text v-for="p in places" :key="p.n + p.x" :class="['place', p.k]" :x="p.x" :y="p.y">{{ p.n }}</text>
            <text class="region"><textPath href="#coast">Region Midtjylland</textPath></text>
            <circle v-for="c in sites" :key="c[0]" :cx="c[0]" :cy="c[1]" r="16" :fill="c[2]" stroke="#10330f" stroke-width="4" />
            <circle cx="670" cy="970" r="16" fill="#e73424" stroke="#5f0f0a" stroke-width="4" />
          </svg>
          <div class="zoom">
            <button aria-label="Zoom in">+</button>
            <button aria-label="Zoom out">−</button>
          </div>
          <div class="similarity">
            <div class="ramp"><span>least similar</span><span class="most">most similar</span></div>
          </div>
          <a class="credit" href="https://leafletjs.com">Leaflet</a>
        </section>

        <section class="panel">
          <div class="charts">
            <ol class="axis">
              <li v-for="(t, i) in ticks" :key="i">{{ t }}</li>
            </ol>
            <div class="row main">
              <div class="gutter"></div>
              <div class="plot">
                <svg :viewBox="`0 0 ${CHART_W} 100`" preserveAspectRatio="none" shape-rendering="crispEdges">
                  <path :d="mainArea" fill="#f7dcc9" />
                  <path :d="mainPeaks" fill="#e8a888" />
                  <rect x="888" width="14" height="100" fill="#d9d9d9" />
                </svg>
                <span class="value">25.74</span>
              </div>
            </div>
            <div class="rows">
              <div v-for="(r, i) in rows" :key="i" class="row" :class="{ first: i === 0 }">
                <div class="gutter">
                  <button aria-label="Pin"><svg width="32" height="32" viewBox="0 0 32 32"><path d="M16 0l4 12h12l-10 7 4 13-10-8-10 8 4-13L0 12h12z" /></svg></button>
                  <button v-if="i" aria-label="Move up"><svg width="24" height="30" viewBox="0 0 24 30"><path d="M12 0l12 12h-7v18H7V12H0z" /></svg></button>
                  <span v-else></span>
                  <button aria-label="Show"><svg width="30" height="30" viewBox="0 0 30 30"><circle cx="15" cy="15" r="13.500" fill="none" stroke="#000" stroke-width="1.600" /><circle cx="15" cy="15" r="10" /></svg></button>
                  <button aria-label="Move down"><svg width="24" height="30" viewBox="0 0 24 30"><path d="M12 30l12-12h-7V0H7v18H0z" /></svg></button>
                </div>
                <div class="plot">
                  <svg :viewBox="`0 0 ${CHART_W} 100`" preserveAspectRatio="none" shape-rendering="crispEdges">
                    <path v-if="r.d" :d="r.d" fill="#f7dcc9" />
                    <rect x="888" :width="r.last ? 14 : 2" height="100" fill="#d9d9d9" />
                  </svg>
                  <span class="value">{{ r.value }}</span>
                  <i v-if="i === 0" class="thumb"></i>
                </div>
              </div>
            </div>
            <div class="selection"></div>
            <div class="cursor"></div>
            <div class="tooltip">2020-01-26 22:55:00</div>
          </div>

          <div class="scale">
            <svg class="bar" viewBox="0 0 1960 40" preserveAspectRatio="none">
              <template v-for="k in 8" :key="k">
                <path :fill="scaleColors[k - 1]" :d="`M${(k - 1) * 245} 0h246v40h-246z`" />
                <path :fill="scaleColors[k]" :d="`M${k * 245} 0v40h-245z`" />
              </template>
            </svg>
            <ol class="marks">
              <li v-for="t in scaleLabels" :key="t">{{ t }}</li>
            </ol>
          </div>

          <div class="controls">
            <div class="range">
              <div class="field">
                <label for="from">From:</label>
                <input id="from" class="stamp" value="2020-01-09T12:15:00" />
              </div>
              <div class="slider">
                <div class="track-box"><div class="span"></div></div>
                <input type="range" aria-label="Range start" min="0" max="1206" value="67" />
                <input type="range" aria-label="Range end" min="0" max="1206" value="1037" />
              </div>
              <div class="field">
                <label for="to">To:</label>
                <input id="to" class="stamp" value="2020-03-20T21:10:00" />
              </div>
            </div>
            <div class="mode">
              <span class="pick">
                <select aria-label="Mapping"><option>Map to pixel</option></select>
                <svg width="24" height="24" viewBox="0 0 24 24"><rect width="24" height="24" rx="6" fill="#3478f6" /><path d="M8 9l4-4 4 4M8 15l4 4 4-4" fill="none" stroke="#fff" stroke-width="2.500" stroke-linecap="round" stroke-linejoin="round" /></svg>
              </span>
              Each 1-pixel wide column represent one point of data
            </div>
          </div>
        </section>
      </main>
    </div>
  </div>
</template>

<style>
body {
  margin: 0;
  background: #fff;
}
</style>

<style scoped>
* {
  box-sizing: border-box;
}
.desktop {
  height: 100vh;
  padding: 76px 112px 148px;
  display: flex;
  overflow: hidden;
  font-family: "Liberation Sans", Arial, sans-serif;
  font-size: 32px;
  color: #000;
}
button {
  padding: 0;
  border: 0;
  background: none;
  font: inherit;
  color: inherit;
  display: flex;
  align-items: center;
  justify-content: center;
}
ol {
  margin: 0;
  padding: 0;
  list-style: none;
}
.window {
  flex: 1;
  min-width: 0;
  display: flex;
  flex-direction: column;
  border-radius: 20px;
  overflow: hidden;
  background: #fff;
  box-shadow: 0 0 0 1px #111, 0 40px 100px rgba(0, 0, 0, 0.7);
}

/* browser toolbar */
.toolbar {
  flex: none;
  height: 106px;
  padding: 0 37px 0 40px;
  display: flex;
  align-items: center;
  background: #333;
  border-bottom: 2px solid #000;
  border-radius: 20px 20px 0 0;
  box-shadow: inset 0 2px 0 #747672, inset 1px 0 0 #555, inset -1px 0 0 #555;
}
.lights {
  display: flex;
  gap: 16px;
}
.lights i {
  width: 24px;
  height: 24px;
  border-radius: 50%;
}
.red { background: #ec6a5e; }
.amber { background: #f4bf50; }
.green { background: #61c554; }
.ico svg {
  fill: none;
  stroke: #b5b5b5;
  stroke-width: 3;
  stroke-linecap: round;
  stroke-linejoin: round;
}
.ico .fill {
  fill: #b5b5b5;
  stroke: none;
}
.sidebar { margin-left: 52px; }
.sidebar path { stroke-width: 2; }
.back { margin-left: 48px; }
.forward { margin-left: 52px; }
.forward svg { stroke: #5e5e5e; }
.badge {
  width: 38px;
  height: 38px;
  margin-left: 195px;
  border-radius: 50%;
  background: #4f9ff9;
  color: #333;
  font-size: 24px;
  font-weight: bold;
}
.ghost { margin-left: 37px; }
.ghost svg { stroke: #5aa5f5; stroke-width: 2; }
.ghost .fill { fill: #7fc4ff; }
.film { margin-left: 37px; }
.film svg { stroke: none; }
.shield { margin: 0 30px 0 39px; }
.address {
  flex: 1;
  height: 56px;
  margin-right: 566px;
  display: flex;
  align-items: center;
  justify-content: center;
  gap: 14px;
  position: relative;
  border-radius: 12px;
  background: #404040;
}
.url {
  width: 470px;
  height: 36px;
  padding: 2px 0 0;
  border: 0;
  background: none;
  color: #fff;
  font: 26px Inter, sans-serif;
}
.reload {
  position: absolute;
  right: 12px;
}
.share { margin-left: 41px; }
.tabs { margin-left: 41px; }
.plus { margin-left: 42px; }

.page {
  flex: 1;
  min-height: 0;
  display: flex;
}

/* map */
.map {
  width: 25%;
  position: relative;
  overflow: hidden;
  border-right: 2px solid #000;
}
.tiles {
  display: block;
  width: 100%;
  height: 100%;
}
.tiles path { vector-effect: non-scaling-stroke; }
.minor, .brook, .marsh, .coast, .track, .white, .white-edge, .yellow, .yellow-edge, .rail, .rail-dash, .motorway, .motorway-edge, .bounds {
  fill: none;
  stroke-linejoin: round;
}
.minor { stroke: #c4c2be; stroke-width: 2; }
.brook { stroke: #9cc8dc; stroke-width: 3; }
.marsh { stroke: #78aee6; stroke-width: 2; }
.coast { stroke: #a891b4; stroke-width: 4; }
.bounds { stroke: #c0a8c4; stroke-width: 3; stroke-dasharray: 8 5; }
.track { stroke: #b4b2b0; stroke-width: 3; }
.white-edge { stroke: #cbcbc9; stroke-width: 5; }
.white { stroke: #fff; stroke-width: 3; }
.yellow-edge { stroke: #d8d99c; stroke-width: 9; }
.yellow { stroke: #f6f7bb; stroke-width: 7; }
.rail { stroke: #757575; stroke-width: 5; }
.rail-dash { stroke: #bdbdbd; stroke-width: 2; stroke-dasharray: 14 14; }
.motorway-edge { stroke: #cf7a8c; stroke-width: 12; }
.motorway { stroke: #dd97a5; stroke-width: 10; }
.place, .ref, .region {
  font-family: "Noto Sans", sans-serif;
  text-anchor: middle;
}
.place {
  fill: #444;
  stroke: rgba(255, 255, 255, 0.7);
  stroke-width: 4px;
  paint-order: stroke;
  font-size: 22px;
}
.place.city { font-size: 28px; }
.place.big { font-size: 26px; }
.place.village { font-size: 20px; }
.place.quarter { font-size: 20px; font-style: italic; fill: #777; }
.place.lake { font-size: 20px; font-style: italic; fill: #6d8fc2; }
.ref { font-size: 22px; fill: #6a6a48; }
.region { font-size: 20px; fill: #a086ae; text-anchor: start; }
.zoom {
  position: absolute;
  top: 20px;
  left: 20px;
  border: 4px solid rgba(0, 0, 0, 0.25);
  border-radius: 10px;
  background-clip: padding-box;
}
.zoom button {
  width: 60px;
  height: 60px;
  padding-top: 8px;
  background: #fff;
  font-size: 44px;
  font-weight: bold;
}
.zoom button:first-child {
  height: 62px;
  border-bottom: 2px solid #ccc;
  border-radius: 6px 6px 0 0;
}
.zoom button:last-child { border-radius: 0 0 6px 6px; }
.similarity {
  position: absolute;
  left: 60px;
  right: 60px;
  bottom: 60px;
  padding: 20px;
  border-radius: 20px;
  background: #fff;
  box-shadow: 0 20px 50px rgba(0, 0, 0, 0.5);
}
.ramp {
  height: 64px;
  padding: 0 16px;
  display: flex;
  align-items: center;
  justify-content: space-between;
  border: 2px solid #000;
  background: linear-gradient(90deg, #ffffdc, #edf8c4 10%, #d5edb8 20%, #a6d5b9 33%, #78bfbd 45%, #529fc0 58%, #3b72ae 70%, #2d4596 82%, #21307f 92%, #202f7c);
}
.most { color: #fff; }
.credit {
  position: absolute;
  right: 0;
  bottom: 0;
  padding: 0 10px;
  background: rgba(255, 255, 255, 0.7);
  color: #2f78a8;
  font-size: 22px;
  line-height: 32px;
  text-decoration: none;
}

/* charts */
.panel {
  flex: 1;
  min-width: 0;
  display: flex;
  flex-direction: column;
}
.charts {
  flex: 1;
  min-height: 0;
  display: flex;
  flex-direction: column;
  position: relative;
  overflow: hidden;
  border-bottom: 2px solid #000;
}
.axis {
  flex: none;
  height: 40px;
  padding-left: 18px;
  display: flex;
  overflow: hidden;
  border-bottom: 2px solid #000;
}
.axis li {
  flex: none;
  width: 96px;
  display: flex;
  flex-direction: column;
  align-items: center;
  font-size: 20px;
  line-height: 30px;
}
.axis li::before {
  content: "";
  width: 2px;
  height: 10px;
  background: #000;
}
.row {
  flex: none;
  display: flex;
  border-bottom: 2px solid #000;
}
.main { border-bottom-width: 6px; }
.rows {
  flex: 1;
  min-height: 0;
  overflow: hidden;
}
.gutter {
  flex: none;
  width: 102px;
  height: 100px;
  display: grid;
  grid-template-columns: 48px 52px;
  grid-template-rows: 44px 52px;
  place-items: center;
  border-right: 2px solid #000;
}
.first .gutter { grid-template-rows: 44px 44px; }
.plot {
  flex: 1;
  min-width: 0;
  height: 100px;
  position: relative;
  background: #f7f7f7;
}
.plot svg {
  display: block;
  width: 100%;
  height: 100px;
}
.value {
  position: absolute;
  top: 0;
  left: 0;
  width: 582px;
  line-height: 102px;
  text-align: right;
}
.thumb {
  position: absolute;
  top: 0;
  right: 4px;
  width: 14px;
  height: 102px;
  background: rgba(0, 0, 0, 0.5);
}
.selection {
  position: absolute;
  top: 0;
  bottom: 0;
  left: 298px;
  width: 484px;
  background: rgba(142, 252, 126, 0.45);
}
.cursor {
  position: absolute;
  top: 0;
  bottom: 0;
  left: 704px;
  width: 2px;
  background: #000;
}
.tooltip {
  position: absolute;
  top: 646px;
  left: 756px;
  padding: 0 10px 2px;
  border-radius: 8px;
  background: rgba(0, 0, 0, 0.9);
  color: #fff;
  line-height: 54px;
}

/* colour scale */
.scale {
  flex: none;
  height: 120px;
  padding: 20px 96px 0 100px;
  overflow: hidden;
  border-bottom: 2px solid #000;
}
.bar {
  display: block;
  width: 100%;
  height: 44px;
  border: 2px solid #000;
}
.marks {
  margin: 0 -120px 0 -123px;
  display: flex;
}
.marks li {
  flex: 1;
  display: flex;
  flex-direction: column;
  align-items: center;
  font-size: 20px;
  line-height: 28px;
}
.marks li::before {
  content: "";
  width: 2px;
  height: 12px;
  background: #000;
}

/* controls */
.controls {
  flex: none;
  height: 198px;
  display: grid;
  grid-template-columns: 2fr 1fr;
}
.range {
  padding: 14px 72px;
  border-right: 2px solid #000;
}
.field {
  display: flex;
  align-items: center;
  gap: 13px;
  line-height: 40px;
}
.stamp {
  width: 294px;
  height: 40px;
  padding: 2px 5px 0;
  border: 0;
  border-top: 2px solid #ececec;
  border-bottom: 2px solid #a4a4a4;
  background: #d3d3d3;
  font: 22px Inter, sans-serif;
}
.slider {
  height: 48px;
  margin: 22px 0 20px;
  padding: 2px 0;
  position: relative;
}
.track-box {
  height: 44px;
  border: 2px solid #000;
  border-radius: 18px;
  background: #fff;
}
.span {
  height: 100%;
  margin: 0 16% 0 9%;
  background: #75fbfd;
}
.slider input {
  position: absolute;
  inset: 0;
  width: 100%;
  height: 48px;
  margin: 0;
  appearance: none;
  background: none;
  pointer-events: none;
}
.slider input::-webkit-slider-thumb {
  appearance: none;
  box-sizing: border-box;
  width: 88px;
  height: 48px;
  border: 4px solid #000;
  border-radius: 16px;
  background: #808080;
  pointer-events: auto;
}
.mode {
  padding: 38px 40px 0 41px;
  line-height: 42px;
}
.pick {
  display: inline-block;
  position: relative;
  margin: 0 5px 0 7px;
  height: 34px;
  line-height: 34px;
  vertical-align: middle;
}
.pick select {
  display: block;
  width: 186px;
  height: 34px;
  padding: 0 0 0 12px;
  border: 0;
  border-radius: 8px;
  appearance: none;
  background: #fff;
  box-shadow: 0 0 0 1px #ddd, 0 2px 3px rgba(0, 0, 0, 0.3);
  color: #222;
  font: 22px Inter, sans-serif;
}
.pick svg {
  position: absolute;
  top: 5px;
  right: 4px;
  pointer-events: none;
}
</style>
